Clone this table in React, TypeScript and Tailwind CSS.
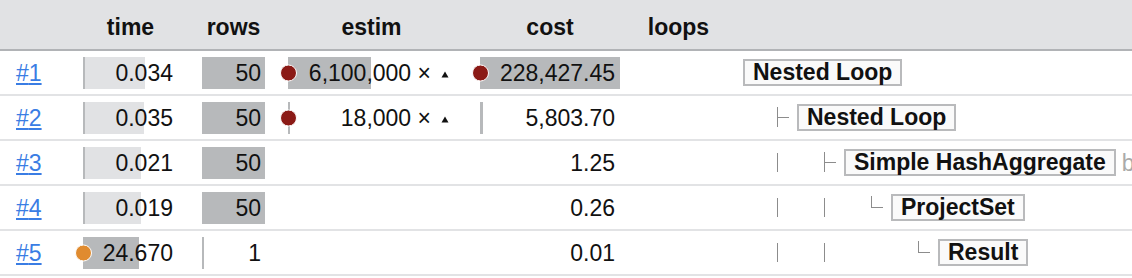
import React from 'react';

type PlanRow = {
  id: number;
  time: string;
  timeLight: number;
  timeDark: number;
  timeDot?: string;
  rows: string;
  rowsBar: number;
  estim?: string;
  estimBar?: number;
  estimDot?: boolean;
  cost: string;
  costBar?: number;
  costDot?: boolean;
  prefix: string[];
  label: string;
  extra?: string;
};

// plan rows, bar widths in px
const plan: PlanRow[] = [
  { id: 1, time: '0.034', timeLight: 62, timeDark: 2, rows: '50', rowsBar: 63, estim: '6,100,000', estimBar: 83, estimDot: true, cost: '228,427.45', costBar: 140, costDot: true, prefix: [], label: 'Nested Loop' },
  { id: 2, time: '0.035', timeLight: 61, timeDark: 2, rows: '50', rowsBar: 63, estim: '18,000', estimBar: 2, estimDot: true, cost: '5,803.70', costBar: 3, prefix: ['tee'], label: 'Nested Loop' },
  { id: 3, time: '0.021', timeLight: 58, timeDark: 2, rows: '50', rowsBar: 63, cost: '1.25', prefix: ['pipe', 'tee'], label: 'Simple HashAggregate', extra: 'buckets' },
  { id: 4, time: '0.019', timeLight: 58, timeDark: 2, rows: '50', rowsBar: 63, cost: '0.26', prefix: ['pipe', 'pipe', 'end'], label: 'ProjectSet' },
  { id: 5, time: '24.670', timeLight: 0, timeDark: 56, timeDot: '#e08b2f', rows: '1', rowsBar: 2, cost: '0.01', prefix: ['pipe', 'pipe', 'blank', 'end'], label: 'Result' },
];

const Dot = ({ color }: { color: string }) => (
  <span
    className="absolute left-[-8px] top-1/2 -translate-y-1/2 w-[17px] h-[17px] rounded-full border border-white z-10"
    style={{ backgroundColor: color }}
  />
);

const BarCell = ({
  width,
  light,
  dark,
  dot,
  children,
}: {
  width: string;
  light?: number;
  dark?: number;
  dot?: string;
  children?: React.ReactNode;
}) => (
  <div className={`relative h-[32px] flex items-center justify-end shrink-0 ${width}`}>
    {light ? <span className="absolute left-0 top-0 h-full bg-[#e1e2e4]" style={{ width: light }} /> : null}
    {dark ? <span className="absolute left-0 top-0 h-full bg-[#b7b9bb]" style={{ width: dark }} /> : null}
    {dot && <Dot color={dot} />}
    <div className="relative flex items-center">{children}</div>
  </div>
);

const Connector = ({ kind }: { kind: string }) => {
  if (kind === 'tee' || kind === 'end') {
    return (
      <span className="relative w-[20px] h-[43px] shrink-0">
        <span
          className={
            kind === 'tee'
              ? 'absolute left-0 top-[11px] h-[20px] w-px bg-[#8c8c8c]'
              : 'absolute left-0 top-[10px] h-[11px] w-px bg-[#8c8c8c]'
          }
        />
        <span className="absolute left-0 top-[21px] w-[12px] h-px bg-[#8c8c8c]" />
      </span>
    );
  }
  return (
    <span className="relative w-[47px] h-[43px] shrink-0">
      {kind === 'pipe' && <span className="absolute left-0 top-[12px] h-[19px] w-px bg-[#8c8c8c]" />}
    </span>
  );
};

export default function App() {
  return (
    <div className="w-[1132px] bg-white text-[23px] text-[#111] font-['Liberation_Sans',Arial,Helvetica,sans-serif] overflow-hidden">
      {/* header */}
      <div className="flex h-[51px] bg-[#e1e2e4] border-b-2 border-[#b1b3b6] font-bold leading-[26px] pt-[14px]">
        <div className="w-[83px] shrink-0" />
        <div className="w-[95px] shrink-0 text-center">time</div>
        <div className="w-[63px] ml-[24px] shrink-0 text-center">rows</div>
        <div className="w-[167px] ml-[23px] shrink-0 text-center">estim</div>
        <div className="w-[140px] ml-[25px] shrink-0 text-center">cost</div>
        <div className="w-[117px] shrink-0 text-center">loops</div>
      </div>

      {plan.map((r) => (
        <div key={r.id} className="flex items-center h-[45px] border-b-2 border-[#e2e3e5] leading-[26px] whitespace-nowrap">
          <div className="w-[83px] shrink-0 pl-4">
            <a href={`#n${r.id}`} className="text-[#3a7de4] underline underline-offset-2 decoration-[1.5px]">
              #{r.id}
            </a>
          </div>

          <BarCell width="w-[95px] pr-[5px]" light={r.timeLight} dark={r.timeDark} dot={r.timeDot}>
            {r.time}
          </BarCell>

          <div className="ml-[24px]">
            <BarCell width="w-[63px] pr-[4px]" dark={r.rowsBar}>
              {r.rows}
            </BarCell>
          </div>

          <div className="ml-[23px]">
            <BarCell width="w-[167px] pr-[6px]" dark={r.estimBar} dot={r.estimDot ? '#8b1a16' : undefined}>
              {r.estim && (
                <>
                  <span>{r.estim} ×</span>
                  <svg width="8" height="7" viewBox="0 0 8 7" className="ml-[10px] mt-[3px]">
                    <path d="M4 0.5 L7.5 6.5 L0.5 6.5 Z" fill="#111" />
                  </svg>
                </>
              )}
            </BarCell>
          </div>

          <div className="ml-[25px]">
            <BarCell width="w-[140px] pr-[5px]" dark={r.costBar} dot={r.costDot ? '#8b1a16' : undefined}>
              {r.cost}
            </BarCell>
          </div>

          <div className="w-[117px] shrink-0" />

          <div className="flex-1 min-w-0 flex items-center pl-[6px] overflow-hidden">
            {r.prefix.length > 0 && <span className="w-[34px] shrink-0" />}
            {r.prefix.map((k, i) => (
              <Connector key={i} kind={k} />
            ))}
            <span className="shrink-0 border-2 border-[#b9babc] bg-[#fafafa] px-[8px] leading-[23px] font-bold">
              {r.label}
            </span>
            {r.extra && <span className="ml-[6px] text-[#aaa]">{r.extra}</span>}
          </div>
        </div>
      ))}
    </div>
  );
}
